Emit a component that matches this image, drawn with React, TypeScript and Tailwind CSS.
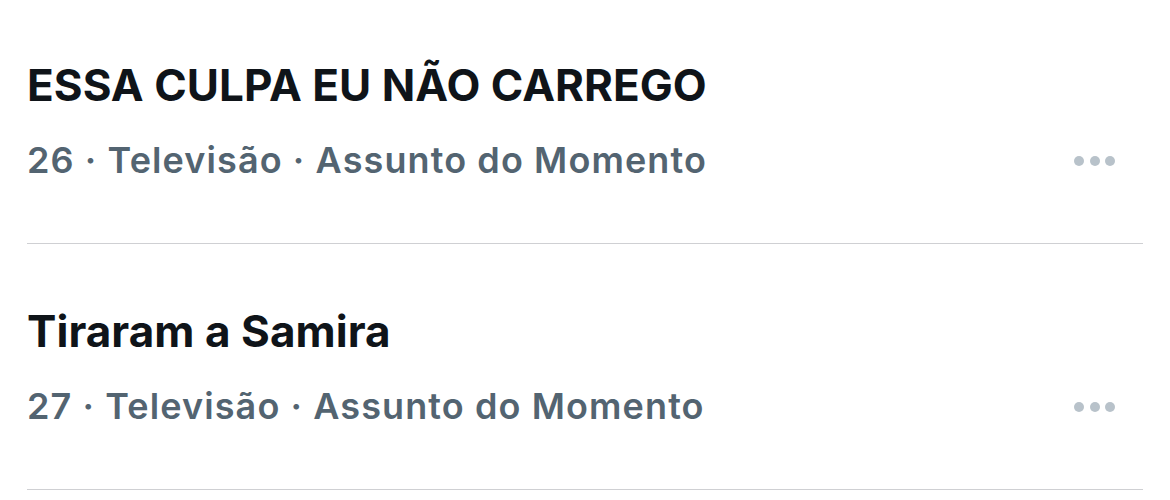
import React from "react";

type Trend = {
  id: number;
  titulo: string;
  categoria: string;
};

const trends: Trend[] = [
  { id: 26, titulo: "ESSA CULPA EU NÃO CARREGO", categoria: "Televisão" },
  { id: 27, titulo: "Tiraram a Samira", categoria: "Televisão" },
];

function MoreDots() {
  return (
    <div className="flex items-center gap-[5.5px]">
      <span className="block h-[10px] w-[10px] rounded-full bg-[#b8c2ca]" />
      <span className="block h-[10px] w-[10px] rounded-full bg-[#b8c2ca]" />
      <span className="block h-[10px] w-[10px] rounded-full bg-[#b8c2ca]" />
    </div>
  );
}

export default function App() {
  return (
    <div
      className="w-[1170px] h-[500px] overflow-hidden bg-white"
      style={{ fontFamily: "Inter, 'Liberation Sans', sans-serif" }}
    >
      <div className="mt-[-2px]">
        {trends.map((t) => (
          <div key={t.id} className="px-[27px]">
            <div className="pt-[59px] pb-[59px]">
              <div className="text-[44px] leading-[56px] font-bold text-[#0f1419] tracking-[0.05px]">
                {t.titulo}
              </div>
              <div className="mt-[23px] flex items-center justify-between">
                <div className="text-[36px] leading-[48px] font-semibold text-[#536471] tracking-[1.1px]">
                  {t.id} · {t.categoria} · Assunto do Momento
                </div>
                <div className="pr-[28px] pt-[1px]">
                  <MoreDots />
                </div>
              </div>
            </div>
            <div className="h-px bg-[#cfd0d3]" />
          </div>
        ))}
      </div>
    </div>
  );
}
